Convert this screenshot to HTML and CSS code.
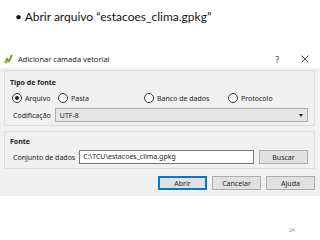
FILE: index.html
```html
<!DOCTYPE html>
<html lang="pt">
<head>
    <meta charset="UTF-8">
    <title>Abrir arquivo</title>
    <link rel="stylesheet" href="styles.css">
</head>
<body>
    <div class="slide">
        <p class="bullet">• Abrir arquivo “estacoes_clima.gpkg”</p>

        <div class="dialog">
            <div class="titlebar">
                <svg class="app-icon" width="10" height="10" viewBox="0 0 10 10">
                    <path d="M1 9 L3 5 L5 7 L8 1" stroke="#6aa52a" stroke-width="2" fill="none"/>
                    <path d="M1 9 L4 8" stroke="#e0c020" stroke-width="1.5"/>
                </svg>
                <span class="title">Adicionar camada vetorial</span>
                <span class="help">?</span>
                <svg class="close" width="8" height="8" viewBox="0 0 8 8">
                    <path d="M0.5 0.5 L7.5 7.5 M7.5 0.5 L0.5 7.5" stroke="#333" stroke-width="0.9"/>
                </svg>
            </div>

            <div class="dialog-body">
                <div class="group">
                    <div class="group-title">Tipo de fonte</div>
                    <div class="radios">
                        <label class="radio r-arquivo"><span class="dot checked"></span>Arquivo</label>
                        <label class="radio r-pasta"><span class="dot"></span>Pasta</label>
                        <label class="radio r-banco"><span class="dot"></span>Banco de dados</label>
                        <label class="radio"><span class="dot"></span>Protocolo</label>
                    </div>
                    <div class="row">
                        <span class="label">Codificação</span>
                        <div class="combo">
                            <span>UTF-8</span>
                            <span class="arrow"></span>
                        </div>
                    </div>
                </div>

                <div class="group group-fonte">
                    <div class="group-title">Fonte</div>
                    <div class="row">
                        <span class="label">Conjunto de dados</span>
                        <div class="input">C:\TCU\estacoes_clima.gpkg</div>
                        <button class="btn btn-buscar">Buscar</button>
                    </div>
                </div>

                <div class="actions">
                    <button class="btn default">Abrir</button>
                    <button class="btn">Cancelar</button>
                    <button class="btn">Ajuda</button>
                </div>
            </div>
        </div>

        <div class="page-num">24</div>
    </div>
</body>
</html>
```

FILE: styles.css
```css
body {
    margin: 0;
    background: white;
}
.slide {
    width: 320px;
    height: 240px;
    position: relative;
    overflow: hidden;
}
.bullet {
    margin: 0;
    padding: 9px 0 0 15px;
    height: 46px;
    box-sizing: border-box;
    font-family: Lato, "Open Sans", sans-serif;
    font-size: 12px;
    color: #111;
}

/* dialog */
.dialog {
    font-family: "Noto Sans", sans-serif;
    font-size: 7px;
    color: #222;
    white-space: nowrap;
}
.titlebar {
    height: 22px;
    display: flex;
    align-items: center;
    padding: 4px 0 0 4px;
    box-sizing: border-box;
    background: white;
}
.app-icon {
    margin-right: 4px;
}
.title {
    font-size: 7.5px;
    flex: 1;
}
.help {
    font-size: 8px;
    margin-right: 22px;
}
.close {
    margin-right: 11px;
}
.dialog-body {
    background: #f0f0f0;
    padding: 2px 5px 6px 4px;
    height: 128px;
    box-sizing: border-box;
}
.group {
    border: 1px solid #dcdcdc;
    padding: 7px 6px 4px 7px;
    height: 56px;
    box-sizing: border-box;
}
.group-title {
    font-weight: bold;
    font-size: 7px;
    margin-left: -2px;
    height: 10px;
}
.radios {
    display: flex;
    align-items: center;
    margin-top: 3px;
    height: 14px;
}
.radio {
    display: flex;
    align-items: center;
}
.r-arquivo { width: 46px; }
.r-pasta { width: 86px; }
.r-banco { width: 84px; }
.dot {
    width: 8px;
    height: 8px;
    border: 1px solid #333;
    border-radius: 50%;
    background: white;
    margin-right: 3px;
    position: relative;
}
.dot.checked::after {
    content: "";
    position: absolute;
    left: 2px;
    top: 2px;
    width: 4px;
    height: 4px;
    border-radius: 50%;
    background: #222;
}
.row {
    display: flex;
    align-items: center;
    margin-top: 3px;
}
.label {
    margin-left: 1px;
    margin-right: 4px;
}
.combo {
    flex: 1;
    height: 12px;
    border: 1px solid #adadad;
    background: #e5e5e5;
    display: flex;
    align-items: center;
    justify-content: space-between;
    padding: 0 4px;
}
.arrow {
    width: 0;
    height: 0;
    border-left: 2.5px solid transparent;
    border-right: 2.5px solid transparent;
    border-top: 3px solid #222;
}
.group-fonte {
    margin-top: 5px;
    height: 38px;
    padding-top: 5px;
}
.group-fonte .row {
    margin-top: 3px;
}
.input {
    flex: 1;
    height: 12px;
    border: 1px solid #7a7a7a;
    background: white;
    padding: 0 3px;
    line-height: 12px;
}
.btn {
    font-family: "Noto Sans", sans-serif;
    font-size: 7px;
    color: #222;
    width: 49px;
    height: 14px;
    padding: 0;
    border: 1px solid #adadad;
    background: #e1e1e1;
}
.btn-buscar {
    margin-left: 5px;
}
.btn.default {
    border: 1px solid #0078d7;
    box-shadow: inset 0 0 0 1px #0078d7;
}
.actions {
    display: flex;
    justify-content: flex-end;
    gap: 5px;
    margin-top: 7px;
}
.page-num {
    position: absolute;
    left: 289px;
    top: 227px;
    font-family: "Open Sans", sans-serif;
    font-size: 5px;
    color: #8a8a8a;
}
```
